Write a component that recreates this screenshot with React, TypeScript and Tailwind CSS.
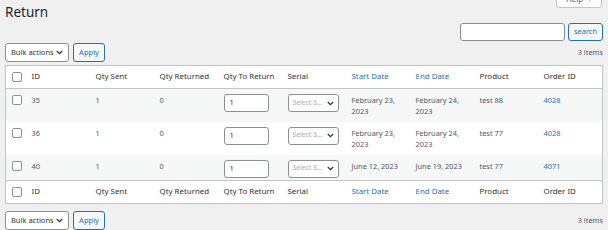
import React from 'react'

type Row = {
  id: string
  sent: string
  returned: string
  start: string
  end: string
  product: string
  order: string
  tall: boolean
}

const rows: Row[] = [
  { id: '35', sent: '1', returned: '0', start: 'February 23, 2023', end: 'February 24, 2023', product: 'test 88', order: '4028', tall: true },
  { id: '36', sent: '1', returned: '0', start: 'February 23, 2023', end: 'February 24, 2023', product: 'test 77', order: '4028', tall: true },
  { id: '40', sent: '1', returned: '0', start: 'June 12, 2023', end: 'June 19, 2023', product: 'test 77', order: '4071', tall: false },
]

function Chevron() {
  return (
    <svg width="7" height="5" viewBox="0 0 7 5" className="shrink-0">
      <path d="M0.8 1 L3.5 3.7 L6.2 1" fill="none" stroke="#2c3338" strokeWidth="1.2" />
    </svg>
  )
}

function Checkbox() {
  return <span className="block w-[10px] h-[10px] rounded-[2px] border border-[#8c8f94] bg-white" />
}

function BulkActions() {
  return (
    <div className="flex items-center gap-[4px]">
      <div className="flex items-center justify-between w-[64px] h-[19px] pl-[5px] pr-[5px] bg-white border border-[#8c8f94] rounded-[3px] text-[7.5px] text-[#2c3338] whitespace-nowrap">
        <span>Bulk actions</span>
        <Chevron />
      </div>
      <div className="flex items-center justify-center w-[32px] h-[19px] bg-[#f6f7f7] border border-[#2271b1] rounded-[3px] text-[7.5px] text-[#2271b1]">
        Apply
      </div>
    </div>
  )
}

function HeadRow({ top }: { top: boolean }) {
  const th = 'px-[5px] text-left font-normal align-middle whitespace-nowrap'
  return (
    <tr className={`${top ? 'h-[23px] border-b' : 'h-[23px] border-t'} border-[#c3c4c7] text-[7.9px] text-[#2c3338]`}>
      <td className="pl-[6px] align-middle">
        <Checkbox />
      </td>
      <th className={th}>ID</th>
      <th className={th}>Qty Sent</th>
      <th className={th}>Qty Returned</th>
      <th className={th}>Qty To Return</th>
      <th className={th}>Serial</th>
      <th className={`${th} text-[#2271b1]`}>Start Date</th>
      <th className={`${th} text-[#2271b1]`}>End Date</th>
      <th className={th}>Product</th>
      <th className={th}>Order ID</th>
    </tr>
  )
}

export default function App() {
  const td = 'px-[5px] pt-[6px] align-top leading-[11px] text-[#50575e]'
  return (
    <div className="relative w-[608px] h-[230px] overflow-hidden bg-[#f0f0f1] px-[5px] font-['Noto_Sans','Liberation_Sans',sans-serif]">
      <div className="absolute right-[6px] top-[-9px] flex items-center gap-[4px] h-[17px] px-[9px] bg-white border border-[#c3c4c7] rounded-b-[3px] text-[7.8px] text-[#50575e]">
        <span>Help</span>
        <span className="text-[5px]">▼</span>
      </div>

      <h1 className="h-[23px] pt-[1px] text-[13.5px] leading-[22px] font-normal text-[#1d2327]">Return</h1>

      <div className="flex justify-end gap-[3px] h-[18px]">
        <div className="w-[105px] h-[18px] bg-white border border-[#8c8f94] rounded-[3px]" />
        <div className="flex items-center justify-center w-[35px] h-[18px] bg-[#f6f7f7] border border-[#2271b1] rounded-[3px] text-[7.5px] text-[#2271b1]">
          search
        </div>
      </div>

      <div className="flex items-center justify-between mt-[2px]">
        <BulkActions />
        <span className="text-[7.4px] text-[#50575e]">3 items</span>
      </div>

      <table className="mt-[3px] w-[598px] table-fixed border-collapse border border-[#c3c4c7] bg-white">
        <colgroup>
          <col className="w-[21px]" />
          {Array.from({ length: 9 }).map((_, i) => (
            <col key={i} className="w-[64px]" />
          ))}
        </colgroup>
        <thead>
          <HeadRow top />
        </thead>
        <tbody className="text-[7.4px] text-[#50575e]">
          {rows.map((r, i) => (
            <tr key={r.id} className={`${r.tall ? 'h-[33px]' : 'h-[26px]'} ${i % 2 === 0 ? 'bg-[#f6f7f7]' : 'bg-white'}`}>
              <td className="pl-[6px] pt-[6px] align-top">
                <Checkbox />
              </td>
              <td className={td}>{r.id}</td>
              <td className={td}>{r.sent}</td>
              <td className={td}>{r.returned}</td>
              <td className="px-[5px] pt-[5px] align-top">
                <div className="flex items-center w-[45px] h-[18px] px-[5px] bg-white border border-[#8c8f94] rounded-[3px] text-[7.5px] text-[#2c3338]">
                  1
                </div>
              </td>
              <td className="px-[5px] pt-[5px] align-top">
                <div className="flex items-center justify-between w-[51px] h-[18px] pl-[4px] pr-[4px] bg-white border border-[#8c8f94] rounded-[3px] text-[6.8px] text-[#a7aaad]">
                  <span className="whitespace-nowrap">Select S...</span>
                  <Chevron />
                </div>
              </td>
              <td className={td}>{r.start}</td>
              <td className={td}>{r.end}</td>
              <td className={td}>{r.product}</td>
              <td className={`${td} !text-[#2271b1]`}>{r.order}</td>
            </tr>
          ))}
        </tbody>
        <tfoot>
          <HeadRow top={false} />
        </tfoot>
      </table>

      <div className="flex items-center justify-between mt-[7px]">
        <BulkActions />
        <span className="text-[7.4px] text-[#50575e]">3 items</span>
      </div>
    </div>
  )
}
